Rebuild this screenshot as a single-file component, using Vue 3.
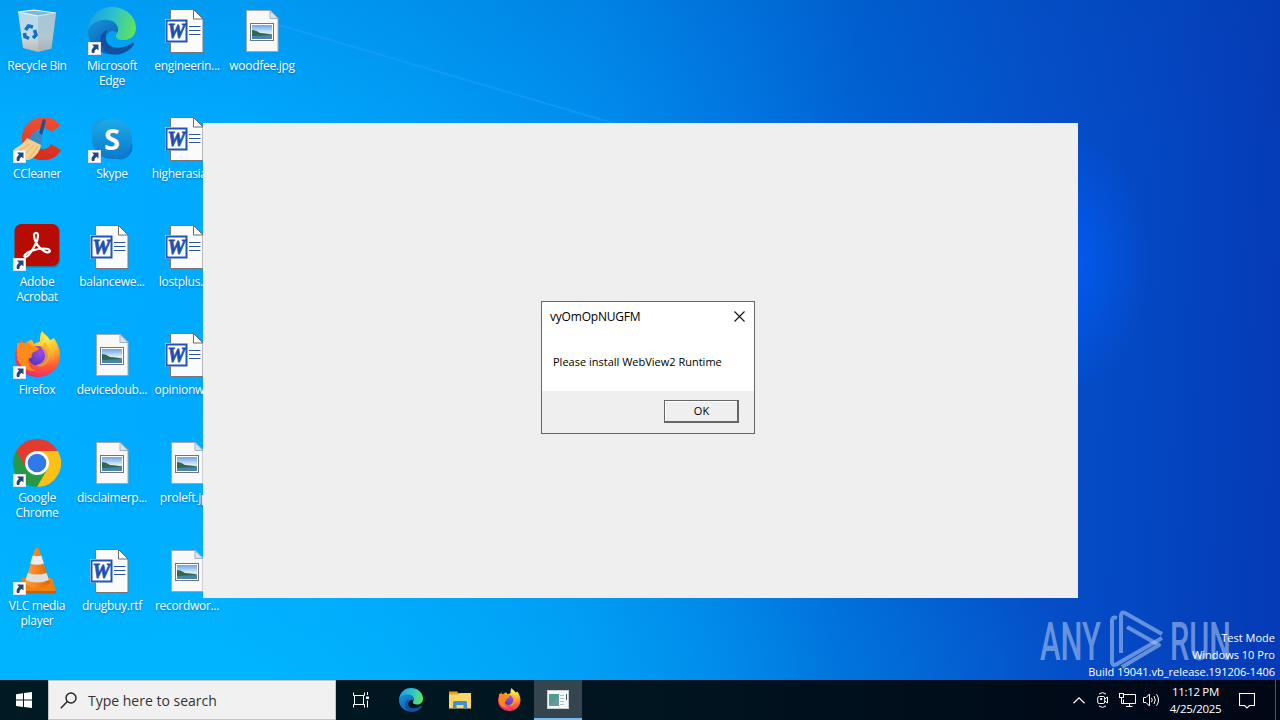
<script setup>
import { ref } from 'vue'

const desktopItems = [
  { icon: 'bin', lines: ['Recycle Bin'] },
  { icon: 'ccleaner', lines: ['CCleaner'], shortcut: true },
  { icon: 'acrobat', lines: ['Adobe', 'Acrobat'], shortcut: true },
  { icon: 'firefox', lines: ['Firefox'], shortcut: true },
  { icon: 'chrome', lines: ['Google', 'Chrome'], shortcut: true },
  { icon: 'vlc', lines: ['VLC media', 'player'], shortcut: true },
  { icon: 'edge', lines: ['Microsoft', 'Edge'], shortcut: true },
  { icon: 'skype', lines: ['Skype'], shortcut: true },
  { icon: 'word', lines: ['balancewe...'] },
  { icon: 'image', lines: ['devicedoub...'] },
  { icon: 'image', lines: ['disclaimerp...'] },
  { icon: 'word', lines: ['drugbuy.rtf'] },
  { icon: 'word', lines: ['engineerin...'] },
  { icon: 'word', lines: ['higherasian...'] },
  { icon: 'word', lines: ['lostplus.rtf'] },
  { icon: 'word', lines: ['opinionwo...'] },
  { icon: 'image', lines: ['proleft.jpg'] },
  { icon: 'image', lines: ['recordwor...'] },
  { icon: 'image', lines: ['woodfee.jpg'] },
]

const buildInfo = ['Test Mode', 'Windows 10 Pro', 'Build 19041.vb_release.191206-1406']

const dialogOpen = ref(true)

function closeDialog() {
  dialogOpen.value = false
}
</script>

<template>
  <div class="screen">
    <svg class="defs" width="0" height="0">
      <defs>
        <linearGradient id="edgeTop" x1="0" y1="0.3" x2="1" y2="0.5">
          <stop offset="0" stop-color="#1b9de2" />
          <stop offset="0.5" stop-color="#2fc0cf" />
          <stop offset="1" stop-color="#5fe45a" />
        </linearGradient>
        <linearGradient id="edgeMid" x1="0" y1="0" x2="0.6" y2="1">
          <stop offset="0" stop-color="#1694dc" />
          <stop offset="1" stop-color="#0c5cae" />
        </linearGradient>
        <radialGradient id="foxBody" cx="0.7" cy="0.15" r="0.95">
          <stop offset="0" stop-color="#fff04a" />
          <stop offset="0.35" stop-color="#ffb52a" />
          <stop offset="0.65" stop-color="#ff5a36" />
          <stop offset="1" stop-color="#e8217c" />
        </radialGradient>
        <radialGradient id="foxCore" cx="0.6" cy="0.3" r="0.8">
          <stop offset="0" stop-color="#9c4bea" />
          <stop offset="1" stop-color="#4b35b4" />
        </radialGradient>
        <linearGradient id="skypeBody" x1="0" y1="0" x2="0" y2="1">
          <stop offset="0" stop-color="#1fabe9" />
          <stop offset="1" stop-color="#0a78cc" />
        </linearGradient>
        <linearGradient id="binBody" x1="0" y1="0" x2="0" y2="1">
          <stop offset="0" stop-color="#b8dcf0" />
          <stop offset="0.65" stop-color="#d3dde3" />
          <stop offset="1" stop-color="#c9b5a9" />
        </linearGradient>
        <linearGradient id="coneBody" x1="0" y1="0" x2="1" y2="0">
          <stop offset="0" stop-color="#ffa033" />
          <stop offset="0.5" stop-color="#f5821f" />
          <stop offset="1" stop-color="#d96400" />
        </linearGradient>
        <linearGradient id="photoSky" x1="0" y1="0" x2="0" y2="1">
          <stop offset="0" stop-color="#6aa4e8" />
          <stop offset="0.55" stop-color="#dcecf8" />
          <stop offset="1" stop-color="#8cb6d4" />
        </linearGradient>
        <linearGradient id="ccRed" x1="0" y1="0" x2="0" y2="1">
          <stop offset="0" stop-color="#ef5238" />
          <stop offset="1" stop-color="#d62a1c" />
        </linearGradient>
      </defs>

      <symbol id="bin" viewBox="0 0 48 48">
        <path d="M5 5 L21 3 L43 6 L38.500 41.500 L25 45 L10 41 Z" fill="url(#binBody)" opacity="0.95" />
        <path d="M5 5 L21 3 L43 6 L25 9 Z" fill="#7fb9d6" />
        <path d="M5 5 L21 3 L43 6 L25 9 Z" fill="none" stroke="#eef6fa" stroke-width="1.200" />
        <path d="M25 9 L43 6 L38.500 41.500 L25 45 Z" fill="#90a9b5" opacity="0.4" />
        <g fill="none" stroke="#1372c6" stroke-width="3.600">
          <path d="M12.500 23 L15.500 19 L20 20" />
          <path d="M21.500 23 L23 28 L20 31" />
          <path d="M16 31.500 L12 29.500 L11.500 26" />
        </g>
      </symbol>

      <symbol id="edge" viewBox="0 0 48 48">
        <path d="M0 24 C1 9 11 0 24 0 C38 0 48 10 48 21 C48 29 42 33 36 33 C30 33 27 31 28 28 C31 24 29 17 22 15 C13 12 4 16 0 24 Z" fill="url(#edgeTop)" />
        <path d="M0 24 C3 16 11 12 20 13 C29 14 32 22 29 26 C26 22 19 24 18 31 C18 39 24 45 30 47 C14 50 0 39 0 24 Z" fill="url(#edgeMid)" />
        <path d="M20 23 C15 30 18 38 25 40 C33 42 40 39 44 36 C46 35 47 37 45 39 C40 45 33 48 27 47.500 C16 46 11 38 12.500 31 C13 27 16 24 20 23 Z" fill="#1151a0" />
      </symbol>

      <symbol id="word" viewBox="0 0 48 48">
        <path d="M7.500 2.500 H30.500 L40 12 V45.500 H7.500 Z" fill="#fbfbfb" stroke="#77777a" />
        <path d="M30.500 2.500 V12 H40 Z" fill="#fff" stroke="#6a6a6c" />
        <path d="M26 19.500 H37.500 M26 23.500 H37.500 M26 27.500 H37.500" stroke="#2b5797" stroke-width="1" />
        <rect x="2" y="12" width="22.500" height="23.500" fill="#fff" />
        <rect x="3.500" y="13.500" width="20" height="21" fill="#fff" stroke="#1d56b8" stroke-width="2" />
        <text x="13.300" y="31" text-anchor="middle" class="word-letter">W</text>
      </symbol>

      <symbol id="image" viewBox="0 0 48 48">
        <path d="M8.500 3.500 H32 L40 11.500 V44.500 H8.500 Z" fill="#f8f8f8" stroke="#a3a8ac" />
        <path d="M32 3.500 V11.500 H40 Z" fill="#d6e6f0" stroke="#a3b2bc" />
        <rect x="12.500" y="16.500" width="23" height="17" fill="#fff" stroke="#6b7784" />
        <rect x="14" y="18" width="20" height="14" fill="url(#photoSky)" />
        <path d="M14 23 Q18 23 22 26 Q27 26 34 27.500 V29 H14 Z" fill="#31664f" />
        <path d="M14 29 L34 28 V32 H14 Z" fill="#4a84a6" />
      </symbol>

      <symbol id="ccleaner" viewBox="0 0 48 48">
        <path d="M47 11 C43 4 37 2 31 2 C17 2 9 12 9 24 C9 37 18 45 30 45 C38 45 44 42 48 35 L38 29 C36 33 33 34 30 34 C24 34 21 30 21 24 C21 17 25 13 30 13 C34 13 36 14 38 17 Z" fill="url(#ccRed)" />
        <path d="M31 6 L27 21" stroke="#2c4f83" stroke-width="3.500" stroke-linecap="round" />
        <path d="M19 18 Q24 15 29 20 L28 31 L15 26 Z" fill="#3c89c4" />
        <path d="M1 34 C8 31 11 27 14 23 L28 30 C27 36 23 42 16 45 C12 45 8 43 7 40 Z" fill="#f5cf8e" />
        <path d="M5 36 L17 29 M10 41 L21 30 M16 44 L25 31" stroke="#dfb272" stroke-width="1" />
      </symbol>

      <symbol id="skype" viewBox="0 0 48 48">
        <circle cx="16" cy="16" r="13" fill="#149fe5" />
        <circle cx="32" cy="32" r="12.500" fill="#087ac8" />
        <circle cx="24" cy="24" r="20" fill="url(#skypeBody)" />
        <text x="24" y="34.500" text-anchor="middle" class="skype-letter">S</text>
      </symbol>

      <symbol id="acrobat" viewBox="0 0 48 48">
        <rect x="2" y="1.500" width="45" height="43" rx="7" fill="#55443f" opacity="0.5" />
        <rect x="1.500" y="1" width="44.500" height="42" rx="7" fill="#b60b00" />
        <path
          d="M22.500 10 C25.500 9 26 14 23 20 C20 27 15 34 12.500 34 C10 34 12 30 18 28 C24 26 31 25 35 26 C39 28 36 31 31 28 C25 25 21 17 21 12.500 C21 11 21.500 10 22.500 10 Z"
          fill="none"
          stroke="#fff"
          stroke-width="2.200"
        />
      </symbol>

      <symbol id="firefox" viewBox="0 0 48 48">
        <path d="M29 0 C32 4 35 5 37 9 C39 8 40 8 41 7 C45 13 47 19 47 24 C47 37 37 46 25 46 C12 46 2 37 2 25 C2 18 5 12 9 8 C9 11 10 12 12 13 C14 10 16 9 19 9 L21 13 C23 11 26 12 27 10 C27 6 27 3 29 0 Z" fill="url(#foxBody)" />
        <circle cx="25" cy="25" r="10" fill="url(#foxCore)" />
        <path d="M4 12 C10 12 15 11 20 15 L26 17 C25 21 20 20 19 23 C18 25 20 27 16 27 C14 33 17 38 23 40 C11 41 3 32 4 22 Z" fill="#ff8a1c" />
        <path d="M32 11 C38 16 38 27 33 33 C30 36 25 36 22 34 C31 34 36 24 28 17 Z" fill="#ffab2e" opacity="0.750" />
      </symbol>

      <symbol id="chrome" viewBox="0 0 48 48">
        <path d="M24 24 L3.200 12 A24 24 0 0 1 44.800 12 Z" fill="#e33b2e" />
        <path d="M24 24 L44.800 12 A24 24 0 0 1 24 48 Z" fill="#fbc116" />
        <path d="M24 24 L24 48 A24 24 0 0 1 3.200 12 Z" fill="#279847" />
        <path d="M24 12 H44.800 L34.400 30 Z" fill="#fbc116" />
        <path d="M34.400 30 L24 48 L13.600 30 Z" fill="#279847" />
        <path d="M13.600 30 L3.200 12 H24 Z" fill="#e33b2e" />
        <circle cx="24" cy="24" r="12" fill="#fff" />
        <circle cx="24" cy="24" r="9.300" fill="#2f79e9" />
      </symbol>

      <symbol id="vlc" viewBox="0 0 48 48">
        <path d="M9 31 H39 L43 44 Q43 46 40 46 H8 Q5 46 6 44 Z" fill="#f08010" />
        <path d="M5 44 H43.500 Q43.500 46.500 41 46.500 H8 Q5 46.500 5 44 Z" fill="#c95f00" />
        <path d="M22 2 Q24 0 26 2 L37 36 Q31 41 24 41 Q17 41 12 36 Z" fill="url(#coneBody)" />
        <path d="M19.700 8.500 Q24 10 28.300 8.500 L31 16.500 Q24 19 17.200 16.500 Z" fill="#ececec" />
        <path d="M14.800 26 Q24 29 33.600 26 L36 33 Q24 38 12.500 33 Z" fill="#dedede" />
      </symbol>

      <symbol id="shortcut" viewBox="0 0 13 13">
        <rect x="0.500" y="0.500" width="12" height="12" fill="#fff" stroke="#dfe3e8" />
        <path d="M4 2.500 H10.500 V8.500 L8.500 6.800 Q6.300 8 6.300 11 H4 Q2.500 7.500 6 4.700 Z" fill="#24467e" />
      </symbol>
    </svg>

    <main class="desktop">
      <svg class="light-ray" width="1280" height="680">
        <path d="M262 20 L640 131" stroke="#2aa4ff" stroke-width="2" opacity="0.400" />
      </svg>

      <ul class="icon-grid">
        <li v-for="(item, i) in desktopItems" :key="i" class="icon-cell">
          <div class="icon-art">
            <svg width="48" height="48"><use :href="'#' + item.icon" /></svg>
            <svg v-if="item.shortcut" class="shortcut" width="13" height="13"><use href="#shortcut" /></svg>
          </div>
          <div v-for="line in item.lines" :key="line" class="icon-label">{{ line }}</div>
        </li>
      </ul>

      <svg class="watermark" width="200" height="66" viewBox="0 0 200 66">
        <text x="1" y="53" textLength="61" lengthAdjust="spacingAndGlyphs">ANY</text>
        <text x="131" y="53" textLength="61" lengthAdjust="spacingAndGlyphs">RUN</text>
        <g fill="none" stroke-width="4" stroke-linejoin="round">
          <path d="M78 11 Q73 9 73 14 V54 Q73 60 78 57 L123 31" />
          <path d="M82 46 V9 Q82 4 86 6 L123 27" />
          <path d="M88 20 L120 38 L83 60" />
        </g>
      </svg>

      <div class="build-info">
        <div v-for="line in buildInfo" :key="line">{{ line }}</div>
      </div>

      <section class="app-window"></section>

      <section v-if="dialogOpen" class="dialog">
        <header class="dialog-title">
          <span>vyOmOpNUGFM</span>
          <button class="dialog-close" type="button" @click="closeDialog">
            <svg width="11" height="11" viewBox="0 0 11 11">
              <path d="M0.500 0.500 L10.500 10.500 M10.500 0.500 L0.500 10.500" stroke="#111" stroke-width="1.100" />
            </svg>
          </button>
        </header>
        <p class="dialog-message">Please install WebView2 Runtime</p>
        <footer class="dialog-footer">
          <button class="ok-button" type="button" @click="closeDialog">OK</button>
        </footer>
      </section>
    </main>

    <footer class="taskbar">
      <div class="start">
        <svg width="16" height="16" viewBox="0 0 16 16">
          <path d="M0 2.200 L7 1.200 V7.600 H0 Z M8 1 L16 0 V7.600 H8 Z M0 8.500 H7 V14.900 L0 13.900 Z M8 8.500 H16 V16 L8 15 Z" fill="#fff" />
        </svg>
      </div>

      <div class="search">
        <svg width="17" height="17" viewBox="0 0 17 17" fill="none" stroke="#222" stroke-width="1.400">
          <circle cx="11" cy="6" r="5" />
          <path d="M7.300 9.600 L0.800 16.200" />
        </svg>
        <span>Type here to search</span>
      </div>

      <div class="task-buttons">
        <div class="task-button task-view">
          <svg width="17" height="16" viewBox="0 0 17 16" fill="none" stroke="#fff">
            <path d="M0.500 0.500 V3.500 H11.500 V0.500 M0.500 15.500 V12.500 H11.500 V15.500 M1.500 3 V12.500 M10.500 3 V12.500 M14.500 0 V3 M14.500 8.500 V15.500" />
            <rect x="13.500" y="5" width="2" height="1.500" fill="#fff" />
          </svg>
        </div>
        <div class="task-button"><svg width="24" height="24"><use href="#edge" /></svg></div>
        <div class="task-button">
          <svg width="22" height="18" viewBox="0 0 22 18">
            <path d="M0 0.500 H8 L10 2.500 H13 V8 H0 Z" fill="#e8a317" />
            <path d="M0 3.500 H9 L11 2 H22 V17.500 H0 Z" fill="#fbd665" />
            <path d="M4 17.500 V11.500 Q4 10 5.500 10 H16.500 Q18 10 18 11.500 V17.500 H14.500 V14 H7.500 V17.500 Z" fill="#3e93cf" />
          </svg>
        </div>
        <div class="task-button"><svg width="24" height="24"><use href="#firefox" /></svg></div>
        <div class="task-button active">
          <svg width="22" height="19" viewBox="0 0 22 19">
            <rect x="0.500" y="0.500" width="21" height="18" fill="#f6f7f7" stroke="#c7cdd0" />
            <rect x="2" y="4" width="10" height="12" fill="#4f9b8e" />
            <path d="M2 16 L12 5 V16 Z" fill="#6f9aa8" opacity="0.600" />
            <path d="M13 5.500 H17 M13 8.500 H17 M13 11.500 H17 M13 14.500 H17" stroke="#b4bcc0" />
            <path d="M19.500 4 V10" stroke="#4c5a60" />
          </svg>
        </div>
      </div>

      <div class="tray">
        <svg width="12" height="7" viewBox="0 0 12 7" fill="none" stroke="#fff" stroke-width="1.200">
          <path d="M0.500 6.300 L6 0.900 L11.500 6.300" />
        </svg>
        <svg width="12" height="16" viewBox="0 0 12 16" fill="none" stroke="#fff">
          <path d="M2 2 Q5.500 -0.800 9 2 M2 14 Q5.500 16.800 9 14" />
          <rect x="0.700" y="4.500" width="7" height="7" rx="1.500" />
          <path d="M7.700 7 L10.500 5 V11 L7.700 9" />
          <rect x="3.700" y="6.500" width="1" height="1" />
        </svg>
        <svg width="17" height="14" viewBox="0 0 17 14" fill="none" stroke="#fff">
          <path d="M5 1.500 H16.500 V10.500 H4.500 V6.500 M10.500 10.500 V13.500 M7 13.500 H13.500" />
          <rect x="0.500" y="0.500" width="4" height="4" />
          <path d="M2.500 4.500 V10.500 H4.500" />
        </svg>
        <svg width="17" height="14" viewBox="0 0 17 14" fill="none" stroke="#fff">
          <path d="M0.500 4.500 H3 L6.500 1 V13 L3 9.500 H0.500 Z" />
          <path d="M8.500 4.800 Q10 7 8.500 9.200 M11 3 Q13.500 7 11 11 M13.500 1.200 Q17.500 7 13.500 12.800" />
        </svg>
      </div>

      <div class="clock">
        <span>11:12 PM</span>
        <span>4/25/2025</span>
      </div>

      <svg class="notify" width="16" height="16" viewBox="0 0 16 16" fill="none" stroke="#fff" stroke-width="1.100">
        <path d="M0.500 0.500 H15.500 V12.500 H10.500 L8 15 L5.500 12.500 H0.500 Z" />
      </svg>
      <div class="peek"></div>
    </footer>
  </div>
</template>

<style>
body {
  margin: 0;
  overflow: hidden;
}
</style>

<style scoped>
.screen {
  width: 1280px;
  height: 720px;
  display: flex;
  flex-direction: column;
  overflow: hidden;
  font-family: 'Open Sans', 'Noto Sans', sans-serif;
  font-size: 12px;
}

.defs {
  position: absolute;
}

.desktop {
  position: relative;
  height: 680px;
  background:
    radial-gradient(ellipse 80px 130px at 1070px 262px, rgba(0, 96, 255, 0.7), rgba(0, 96, 255, 0) 100%),
    linear-gradient(180deg, rgba(0, 60, 160, 0.14), rgba(0, 60, 160, 0) 20%),
    radial-gradient(ellipse 850px 260px at 250px 690px, rgba(0, 188, 255, 0.65), rgba(0, 180, 255, 0)),
    linear-gradient(
      92deg,
      #00aeff 0,
      #00aaff 240px,
      #00a0f8 400px,
      #008fef 590px,
      #0078e2 740px,
      #0063d4 860px,
      #0451ca 1030px,
      #0447c2 1160px,
      #053bb6 1290px
    );
}

.light-ray {
  position: absolute;
  top: 0;
  left: 0;
}

.icon-grid {
  margin: 0;
  padding: 0;
  list-style: none;
  display: grid;
  grid-template-rows: repeat(6, 108px);
  grid-auto-columns: 75px;
  grid-auto-flow: column;
}

.icon-cell {
  box-sizing: border-box;
  width: 74px;
  padding-top: 7px;
  text-align: center;
  color: #fff;
  display: flex;
  flex-direction: column;
  align-items: center;
}

.icon-art {
  position: relative;
  width: 48px;
  height: 48px;
  margin: 0 0 3px;
}

.icon-art svg {
  display: block;
}

.icon-art .shortcut {
  position: absolute;
  left: 0;
  bottom: 0;
}

.icon-label {
  line-height: 15px;
  letter-spacing: -0.3px;
  white-space: nowrap;
  text-shadow: 0 1px 2px rgba(0, 40, 90, 0.45);
}

.word-letter {
  font-family: 'Liberation Serif', serif;
  font-size: 20px;
  font-weight: 700;
  font-style: italic;
  fill: #1d4fb0;
  stroke: #1d4fb0;
  stroke-width: 0.8px;
}

.skype-letter {
  font-family: 'Open Sans', sans-serif;
  font-size: 29px;
  font-weight: 700;
  fill: #fff;
}

.watermark {
  position: absolute;
  left: 1039px;
  top: 607px;
  stroke: rgba(160, 190, 236, 0.62);
}

.watermark text {
  font-family: Roboto, sans-serif;
  font-size: 53px;
  font-weight: 500;
  fill: rgba(160, 190, 236, 0.65);
  stroke: none;
}

.build-info {
  position: absolute;
  right: 5px;
  bottom: 0;
  color: #fff;
  font-size: 11px;
  line-height: 17px;
  text-align: right;
}

.app-window {
  position: absolute;
  left: 203px;
  top: 123px;
  width: 875px;
  height: 475px;
  background: #efefef;
}

.dialog {
  position: absolute;
  left: 541px;
  top: 301px;
  width: 214px;
  height: 133px;
  box-sizing: border-box;
  border: 1px solid #666;
  background: #fff;
  color: #000;
  display: flex;
  flex-direction: column;
}

.dialog-title {
  height: 28px;
  padding: 0 9px 0 8px;
  display: flex;
  align-items: center;
  justify-content: space-between;
  letter-spacing: -0.2px;
}

.dialog-close {
  padding: 0;
  border: none;
  background: none;
  display: flex;
}

.dialog-message {
  flex: 1;
  margin: 0;
  padding: 24px 0 0 11px;
  font-size: 11px;
  line-height: 16px;
  white-space: nowrap;
}

.dialog-footer {
  height: 42px;
  padding: 9px 15px 0 0;
  box-sizing: border-box;
  background: #efefef;
  display: flex;
  justify-content: flex-end;
}

.ok-button {
  width: 75px;
  height: 23px;
  padding: 0 0 1px 1px;
  border: 1px solid #666;
  border-right: 2px solid #666;
  border-bottom: 2px solid #666;
  background: #efefef;
  box-shadow: inset 1px 1px 0 #fff;
  font-family: inherit;
  font-size: 11px;
  color: #000;
}

.taskbar {
  height: 40px;
  display: flex;
  align-items: center;
  background: linear-gradient(90deg, #001a24, #001520 50%, #000a18 85%, #000816);
}

.start {
  width: 48px;
  display: flex;
  justify-content: center;
}

.search {
  width: 288px;
  height: 40px;
  box-sizing: border-box;
  padding-left: 11px;
  border: 1px solid #c4c4c4;
  background: #f1f1f1;
  display: flex;
  align-items: center;
  gap: 11px;
  color: #333;
  font-size: 14px;
}

.task-buttons {
  display: flex;
  gap: 1px;
}

.task-button {
  width: 48px;
  height: 40px;
  display: flex;
  align-items: center;
  justify-content: center;
}

.task-view {
  width: 50px;
}

.active {
  box-sizing: border-box;
  border-bottom: 2px solid #76b9ed;
  padding-top: 1px;
  background: #35454f;
}

.tray {
  margin-left: auto;
  display: flex;
  align-items: center;
  gap: 10px;
}

.tray svg:nth-child(2) {
  margin-left: 2px;
}

.tray svg:nth-child(4) {
  margin-left: -3px;
}

.clock {
  width: 71px;
  display: flex;
  flex-direction: column;
  align-items: center;
  color: #fff;
  font-size: 11.5px;
  letter-spacing: -0.35px;
  line-height: 17px;
}

.notify {
  margin: 2px 20px 0 8px;
}

.peek {
  width: 4px;
  height: 40px;
  border-left: 1px solid #4c5560;
}
</style>
